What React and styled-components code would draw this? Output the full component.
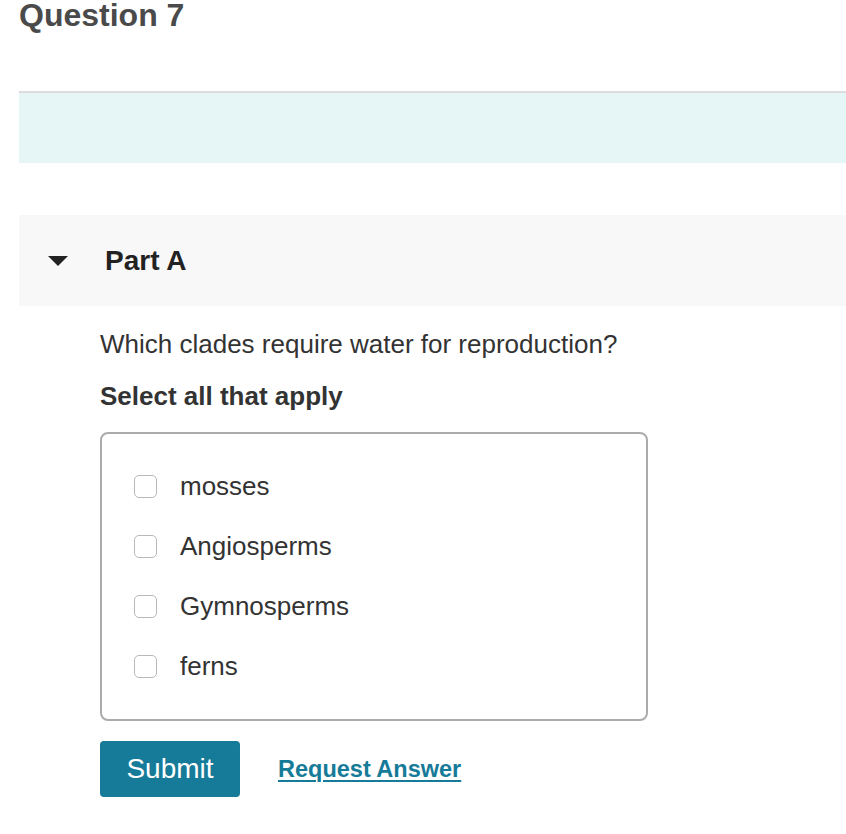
import React from 'react';
import styled, { createGlobalStyle } from 'styled-components';

const GlobalStyle = createGlobalStyle`
    body {
        margin: 0;
        background: #ffffff;
        font-family: "Liberation Sans", Arial, sans-serif;
        color: #333333;
    }
`;

const options = ['mosses', 'Angiosperms', 'Gymnosperms', 'ferns'];

const App = () => {
    return (
        <Page>
            <GlobalStyle />
            <Title>Question 7</Title>
            <Banner />
            <PartHeader>
                <Caret viewBox="0 0 20 10">
                    <path d="M0 0 L20 0 L10 10 Z" fill="#222222" />
                </Caret>
                <PartTitle>Part A</PartTitle>
            </PartHeader>
            <Body>
                <Prompt>Which clades require water for reproduction?</Prompt>
                <Hint>Select all that apply</Hint>
                <Choices>
                    {options.map((opt) => (
                        <Choice key={opt}>
                            <Check type="checkbox" />
                            <span>{opt}</span>
                        </Choice>
                    ))}
                </Choices>
                <Actions>
                    <SubmitButton>Submit</SubmitButton>
                    <RequestLink href="#">Request Answer</RequestLink>
                </Actions>
            </Body>
        </Page>
    );
};

export default App;

const Page = styled.div`
    padding-left: 19px;
    width: 827px;
`;

const Title = styled.h1`
    margin: 0;
    font-size: 32px;
    line-height: 30px;
    font-weight: 700;
    color: #4a4a4a;
`;

const Banner = styled.div`
    margin-top: 61px;
    height: 70px;
    border-top: 2px solid #dcdcdc;
    background: #e6f5f5;
`;

const PartHeader = styled.div`
    margin-top: 52px;
    height: 91px;
    background: #f8f8f8;
    display: flex;
    align-items: center;
    padding-left: 29px;
`;

const Caret = styled.svg`
    width: 20px;
    height: 10px;
    margin-right: 37px;
`;

const PartTitle = styled.h2`
    margin: 0;
    font-size: 28px;
    font-weight: 700;
    color: #222222;
`;

const Body = styled.div`
    padding-left: 81px;
`;

const Prompt = styled.p`
    margin: 23px 0 0;
    font-size: 26px;
    line-height: 30px;
    color: #333333;
`;

const Hint = styled.p`
    margin: 22px 0 0;
    font-size: 26px;
    line-height: 30px;
    font-weight: 700;
    color: #333333;
`;

const Choices = styled.div`
    margin-top: 21px;
    width: 512px;
    border: 2px solid #ababab;
    border-radius: 8px;
    padding: 22px 0 23px 32px;
`;

const Choice = styled.label`
    display: flex;
    align-items: center;
    height: 60px;
    font-size: 26px;
    color: #333333;
    gap: 23px;
`;

const Check = styled.input`
    appearance: none;
    margin: 0;
    width: 23px;
    height: 23px;
    border: 1.5px solid #b8b8b8;
    border-radius: 5px;
    background: #ffffff;
    box-sizing: border-box;
`;

const Actions = styled.div`
    margin-top: 20px;
    display: flex;
    align-items: center;
    gap: 38px;
`;

const SubmitButton = styled.button`
    width: 140px;
    height: 56px;
    border: none;
    border-radius: 4px;
    background: #167b98;
    color: #ffffff;
    font-family: "Liberation Sans", Arial, sans-serif;
    font-size: 28px;
    padding: 0;
`;

const RequestLink = styled.a`
    font-size: 23.5px;
    font-weight: 700;
    color: #167b98;
    text-decoration: underline;
    text-decoration-thickness: 2px;
    text-underline-offset: 3px;
`;
